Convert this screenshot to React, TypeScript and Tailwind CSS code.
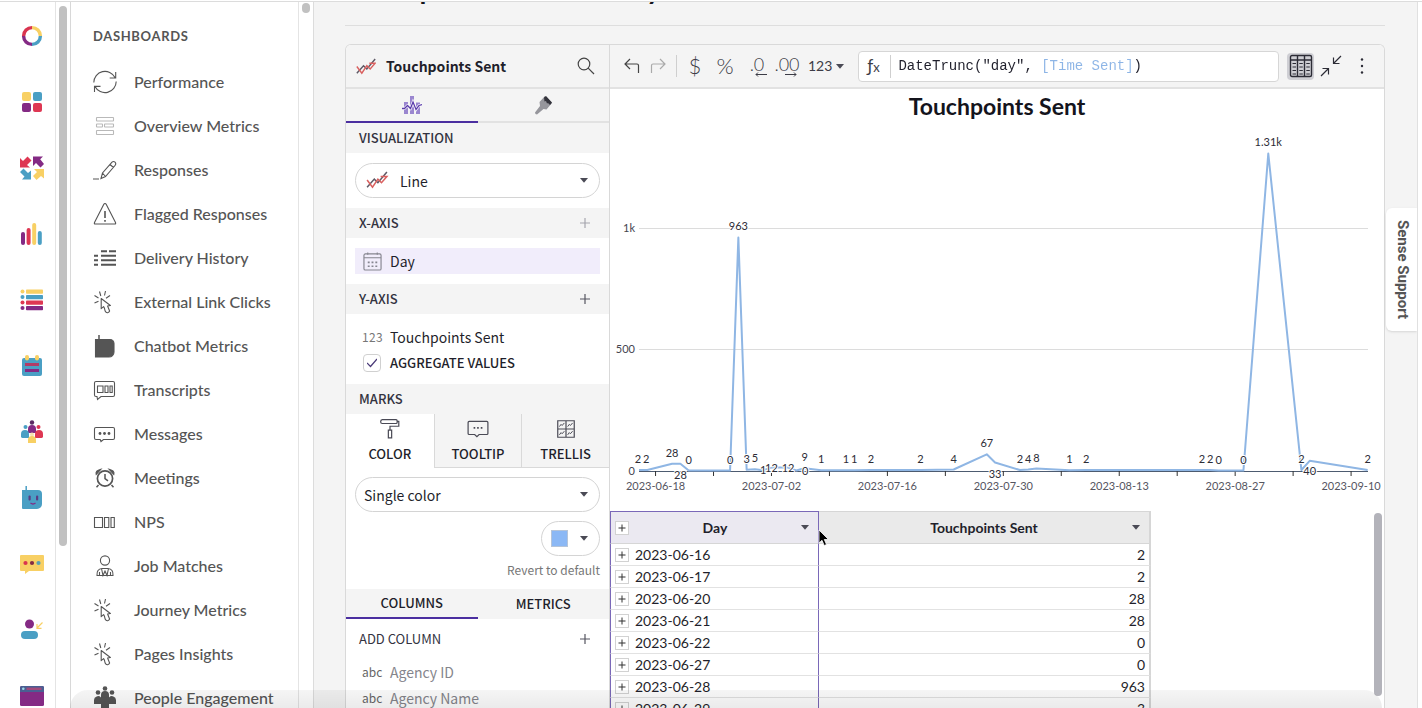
import type { ReactNode } from "react";

const PANEL_FONT = "font-['Noto_Sans_CJK_SC','Noto_Sans',sans-serif]";

// ---------- Rail icons ----------
const railIcons: { label: string; art: ReactNode }[] = [
  {
    label: "Home",
    art: (
      <g fill="none" strokeWidth="3.4">
        <path d="M12 3.6A8.4 8.4 0 0 0 3.6 12" stroke="#d9344f" />
        <path d="M3.6 12A8.4 8.4 0 0 0 12 20.4" stroke="#842a84" />
        <path d="M12 20.4A8.4 8.4 0 0 0 20.4 12" stroke="#4a9fc4" />
        <path d="M20.4 12A8.4 8.4 0 0 0 12 3.6" stroke="#f8d064" />
      </g>
    ),
  },
  {
    label: "Apps",
    art: (
      <>
        <rect x="2" y="2" width="9" height="9" rx="2" fill="#f8d064" />
        <rect x="13" y="2" width="9" height="9" rx="2" fill="#4a9fc4" />
        <rect x="2" y="13" width="9" height="9" rx="2" fill="#842a84" />
        <rect x="13" y="13" width="9" height="9" rx="2" fill="#de3753" />
      </>
    ),
  },
  {
    label: "Journeys",
    art: (
      <>
        <path d="M0 2l3 3 4.500-4.500 4 4L7 9l3 2.500H0z" fill="#de3753" />
        <path d="M13 .5h10l-2.800 2.800L24 8l-3.500 3.500L16 7l-3 3z" fill="#842a84" />
        <path d="M0 16l3.500-3.500L8 17l3-2.500v9H2L4.500 20.500z" fill="#4a9fc4" />
        <path d="M24 13v9.500l-3-2.500-4.500 4-3.500-4 4-4-3-3z" fill="#f8d064" />
      </>
    ),
  },
  {
    label: "Analytics",
    art: (
      <>
        <rect x="1" y="10" width="4" height="13" rx="2" fill="#842a84" />
        <rect x="6.600" y="6" width="4" height="17" rx="2" fill="#de3753" />
        <rect x="12.200" y="1" width="4" height="22" rx="2" fill="#f8d064" />
        <rect x="17.800" y="9" width="4" height="14" rx="2" fill="#4a9fc4" />
      </>
    ),
  },
  {
    label: "Lists",
    art: (
      <>
        {["#f8d064", "#4a9fc4", "#de3753", "#842a84"].map((c, i) => (
          <g key={c} fill={c}>
            <circle cx="2.500" cy={3.5 + i * 5.5} r="2" />
            <rect x="6" y={1.5 + i * 5.5} width="17" height="4.200" rx="0.800" />
          </g>
        ))}
      </>
    ),
  },
  {
    label: "Calendar",
    art: (
      <>
        <rect x="2" y="4" width="20" height="18" rx="2" fill="#4a9fc4" />
        <rect x="5" y="1" width="4" height="5.500" rx="2" fill="#f8d064" />
        <rect x="15" y="1" width="4" height="5.500" rx="2" fill="#f8d064" />
        <rect x="5" y="9" width="14" height="3" fill="#b23a66" />
        <rect x="5" y="15" width="14" height="3" fill="#842a84" />
      </>
    ),
  },
  {
    label: "People",
    art: (
      <>
        <circle cx="12" cy="2.500" r="2.200" fill="#5b2a63" />
        <path d="M8 13V9a4 4 0 0 1 8 0v4z" fill="#842a84" />
        <circle cx="5.500" cy="7" r="2" fill="#4a9fc4" />
        <circle cx="18.500" cy="7" r="2" fill="#de3753" />
        <path d="M1 17v-3a4 4 0 0 1 8 0v4H3a2 2 0 0 1-2-1z" fill="#4a9fc4" />
        <path d="M15 18v-4a4 4 0 0 1 8 0v3a2 2 0 0 1-2 1z" fill="#de3753" />
        <circle cx="12" cy="14.500" r="2" fill="#f6e2b0" />
        <path d="M8 23v-3a4 4 0 0 1 8 0v3z" fill="#f8d064" />
      </>
    ),
  },
  {
    label: "Chatbot",
    art: (
      <>
        <path d="M6.200 0v6" stroke="#4a9fc4" strokeWidth="1.500" />
        <path d="M2 4h16a4 4 0 0 1 4 4v10a5 5 0 0 1-5 5H3a1 1 0 0 1-1-1z" fill="#4a9fc4" />
        <rect x="8.500" y="9.500" width="2.200" height="5" rx="1" fill="#5a3b84" />
        <rect x="16" y="9.500" width="2.200" height="5" rx="1" fill="#5a3b84" />
        <path d="M10.500 17q2.500 2 5 0" stroke="#842a84" strokeWidth="1.300" fill="none" />
      </>
    ),
  },
  {
    label: "Messages",
    art: (
      <>
        <path d="M1 3h22a1 1 0 0 1 1 1v14a1 1 0 0 1-1 1H9l-4 3v-3H1a1 1 0 0 1-1-1V4a1 1 0 0 1 1-1z" fill="#f8d064" />
        <circle cx="5.500" cy="11" r="2.100" fill="#d9344f" />
        <circle cx="12" cy="11" r="2.100" fill="#842a44" />
        <circle cx="18.500" cy="11" r="2.100" fill="#5ba1b0" />
      </>
    ),
  },
  {
    label: "Referrals",
    art: (
      <>
        <circle cx="9.500" cy="6" r="4.500" fill="#842a84" />
        <path d="M1 17a4 4 0 0 1 4-4h9a4 4 0 0 1 0 8H5a4 4 0 0 1-4-4z" fill="#4a9fc4" />
        <path d="M22.500 4.500l-5.500 5.500M17 6v4.300h4.500" stroke="#f8d064" strokeWidth="1.200" fill="none" />
      </>
    ),
  },
  {
    label: "Pages",
    art: (
      <>
        <rect x="0" y="2" width="24" height="20" rx="1.500" fill="#842a84" />
        <path d="M1.500 2h21A1.500 1.500 0 0 1 24 3.500V8H0V3.500A1.500 1.500 0 0 1 1.500 2z" fill="#4a5f92" />
        <rect x="6.500" y="3.600" width="15" height="2.400" fill="#a34a7c" />
        <circle cx="3.300" cy="4.800" r="1.300" fill="#9fd6e6" />
      </>
    ),
  },
];

// ---------- Dashboard nav icons ----------
const clickArt = (
  <>
    <path d="M8.200 8.500v10.200l2.400-2q1 1.300 1.500 4.300 1 2 2.500 1.700t2-1.700l-2-5 2.800-.500z" strokeLinejoin="round" />
    <path d="M6.500 1.500l1.300 4.500M12.500 1l-1 4.500M1.500 5.500l4 2.500M17 5.500l-4 2.700M1.500 13l4-1.800" />
  </>
);

const navItems: { label: string; art: ReactNode }[] = [
  {
    label: "Performance",
    art: <path d="M.8 12.500A11.200 11.200 0 0 1 22 7.500M22.700 2v6h-6M23.200 11.500A11.200 11.200 0 0 1 2 16.500M1.500 22v-5.600h6" />,
  },
  {
    label: "Overview Metrics",
    art: (
      <g stroke="#b9b9b9">
        <rect x="3.500" y="3.500" width="17" height="3.500" rx="0.500" />
        <rect x="3.500" y="10" width="6" height="3" rx="0.500" />
        <rect x="11.500" y="10" width="9" height="3" rx="0.500" />
        <rect x="3.500" y="16.500" width="17" height="4" rx="0.500" />
      </g>
    ),
  },
  {
    label: "Responses",
    art: <path d="M0 21h6M8 20.500l1.500-5.500L19 4.200q1.500-1.500 3 0t0 3.300L12.500 18.500zM17 6.500l3.500 3M9.500 15l3 3.500" />,
  },
  {
    label: "Flagged Responses",
    art: (
      <>
        <path d="M12 1.500q.8 0 1.300 1l9.200 18q.6 1.500-.8 1.500H2.300q-1.400 0-.8-1.500l9.200-18q.5-1 1.300-1z" />
        <path d="M12 9v7M12 18v1.800" strokeWidth="1.600" />
      </>
    ),
  },
  {
    label: "Delivery History",
    art: (
      <path
        d="M8 5.300h6M16 5.300h7M1 9.800h4M8 9.800h15M1 14.200h4M8 14.200h15M1 18.700h4M8 18.700h15"
        strokeWidth="2"
      />
    ),
  },
  { label: "External Link Clicks", art: clickArt },
  {
    label: "Chatbot Metrics",
    art: (
      <>
        <path d="M6 1v5" strokeWidth="1.500" />
        <path d="M2.500 5.500H17a4 4 0 0 1 4 4V18a5 5 0 0 1-5 5H2.500z" fill="#555" />
      </>
    ),
  },
  {
    label: "Transcripts",
    art: (
      <>
        <path d="M3 3.500h17q1.500 0 1.500 1.500v12q0 1.500-1.500 1.500H8L4.500 21.500l-.5-3H3q-1.500 0-1.500-1.500V5q0-1.500 1.500-1.500z" />
        <path d="M4.500 8h5.500v6.500H4.500zM12 8h3v6.500h-3zM17 8h2.200v6.500H17z" />
      </>
    ),
  },
  {
    label: "Messages",
    art: (
      <>
        <path d="M3 5.500h17q1.500 0 1.500 1.500v9q0 1.500-1.500 1.500h-9.500l-2.500 2-.8-2H3q-1.500 0-1.500-1.500V7q0-1.500 1.500-1.500z" />
        <g fill="#555" stroke="none">
          <circle cx="7" cy="11.500" r="1.400" />
          <circle cx="11.500" cy="11.500" r="1.400" />
          <circle cx="16" cy="11.500" r="1.400" />
        </g>
      </>
    ),
  },
  {
    label: "Meetings",
    art: (
      <>
        <circle cx="12" cy="12.500" r="7.600" strokeWidth="1.700" />
        <path d="M12 8v4.700l3 2.200M5.500 19l-2 2.200M18.500 19l2 2.200" strokeWidth="1.500" />
        <path d="M3.200 8.500Q2 4.500 8 3.200zM20.800 8.500Q22 4.500 16 3.200z" fill="#555" />
      </>
    ),
  },
  {
    label: "NPS",
    art: <path d="M1.500 7.500h8v10h-8zM11.500 7.500h4.300v10h-4.300zM18 7.500h3.300v10H18z" />,
  },
  {
    label: "Job Matches",
    art: (
      <>
        <circle cx="12" cy="6.500" r="4.600" />
        <path d="M4 21.500q-.5-6.500 5-7h6q5.500.5 5 7zM8.500 14.500l1.500 7 2-4.500 2 4.500 1.500-7M6.500 21.500V18M17.500 21.500V18" />
      </>
    ),
  },
  { label: "Journey Metrics", art: clickArt },
  { label: "Pages Insights", art: clickArt },
  {
    label: "People Engagement",
    art: (
      <g fill="#555" stroke="none">
        <circle cx="12" cy="2.500" r="2.300" />
        <circle cx="5" cy="6.500" r="2.300" />
        <circle cx="19" cy="6.500" r="2.300" />
        <path d="M8 12V9a4 4 0 0 1 8 0v3z" />
        <path d="M1 18v-4a4 4 0 0 1 7-2.500h8a4 4 0 0 1 7 2.500v4h-7v5H8v-5z" />
      </g>
    ),
  },
];

// ---------- Chart data: days after 2023-06-16, value, and label shift from the point ----------
type Point = { day: number; value: number; dy?: number; dx?: number };

const points: Point[] = [
  { day: 0, value: 2, dx: -1 },
  { day: 1, value: 2, dx: -1 },
  { day: 4, value: 28 },
  { day: 5, value: 28, dy: 15 },
  { day: 6, value: 0 },
  { day: 11, value: 0 },
  { day: 12, value: 963 },
  { day: 13, value: 3 },
  { day: 14, value: 5 },
  { day: 15, value: 1, dy: 4 },
  { day: 16, value: 12, dy: 4 },
  { day: 18, value: 12, dy: 4 },
  { day: 19, value: 0, dy: 4, dx: 9 },
  { day: 20, value: 9 },
  { day: 22, value: 1 },
  { day: 25, value: 1 },
  { day: 26, value: 1 },
  { day: 28, value: 2 },
  { day: 34, value: 2 },
  { day: 38, value: 4 },
  { day: 42, value: 67 },
  { day: 43, value: 33, dy: 15 },
  { day: 46, value: 2 },
  { day: 47, value: 4 },
  { day: 48, value: 8 },
  { day: 52, value: 1 },
  { day: 54, value: 2 },
  { day: 68, value: 2 },
  { day: 69, value: 2 },
  { day: 70, value: 0 },
  { day: 73, value: 0 },
  { day: 76, value: 1310 },
  { day: 80, value: 2 },
  { day: 81, value: 40, dy: 14 },
  { day: 88, value: 2 },
];

const DAY_WIDTH = 8.28;
const px = (day: number) => 29 + day * DAY_WIDTH;
const py = (value: number) => 381.5 - value * 0.242;

const xTicks = [
  "2023-06-18",
  "2023-07-02",
  "2023-07-16",
  "2023-07-30",
  "2023-08-13",
  "2023-08-27",
  "2023-09-10",
];

const rows = [
  ["2023-06-16", "2"],
  ["2023-06-17", "2"],
  ["2023-06-20", "28"],
  ["2023-06-21", "28"],
  ["2023-06-22", "0"],
  ["2023-06-27", "0"],
  ["2023-06-28", "963"],
  ["2023-06-29", "3"],
];

// ---------- Small shared pieces ----------
const Caret = ({ className = "" }: { className?: string }) => (
  <svg viewBox="0 0 8 5" className={`h-[5px] w-2 ${className}`} fill="#4a4a55" aria-hidden="true">
    <path d="M0 0h8L4 4.800z" />
  </svg>
);

const LineIcon = ({ className = "" }: { className?: string }) => (
  <svg viewBox="0 0 24 20" className={className} fill="none" strokeWidth="1.700" aria-hidden="true">
    <path d="M1 18l8-9 4 4L23 1" stroke="#5f5a66" />
    <path d="M1 10l6 8 6-9 4 4 6-7h-7" stroke="#d9605f" />
  </svg>
);

const Plus = ({ color = "#555560" }: { color?: string }) => (
  <svg viewBox="0 0 10 10" className="size-2.5" stroke={color} strokeWidth="1.200" aria-hidden="true">
    <path d="M5 0v10M0 5h10" />
  </svg>
);

const SectionHeader = ({ title, plus }: { title: string; plus?: string }) => (
  <div className="flex h-[30px] items-center justify-between bg-[#f4f4f4] pr-[19px] pl-[13px]">
    <h3 className="text-[13px] leading-5 font-medium text-[#33333f]">{title}</h3>
    {plus && (
      <button type="button" aria-label={`Add to ${title}`}>
        <Plus color={plus} />
      </button>
    )}
  </div>
);

const Rail = () => (
  <div className="flex shrink-0 border-r border-[#d8d8d8]">
    <nav aria-label="Main" className="w-14 border-r border-[#e4e4e4] pt-px pl-2">
      {railIcons.map((item) => (
        <a key={item.label} href="#" aria-label={item.label} className="flex h-[66px] items-center justify-center">
          <svg viewBox="0 0 24 24" className="size-6" aria-hidden="true">
            {item.art}
          </svg>
        </a>
      ))}
    </nav>
    <div className="w-3.5 px-[3px] pt-1">
      <div className="h-[540px] rounded-full bg-[#c1c1c1]" />
    </div>
  </div>
);

const Sidebar = () => (
  <div className="flex shrink-0 border-r border-[#dcdcdc]">
    <nav aria-label="Dashboards" className="w-[228px] border-r border-[#e4e4e4] pl-[22px] font-['Lato',sans-serif] text-[#555]">
      <h2 className="h-[58px] pt-6 text-[13px] leading-5 font-bold tracking-wider">DASHBOARDS</h2>
      {navItems.map((item) => (
        <a key={item.label} href="#" className="flex h-11 items-center gap-[17px] text-base font-medium whitespace-nowrap">
          <svg viewBox="0 0 24 24" className="size-6 shrink-0" fill="none" stroke="#555" strokeWidth="1.100" aria-hidden="true">
            {item.art}
          </svg>
          {item.label}
        </a>
      ))}
    </nav>
    <div className="w-3.5 px-[3px] pt-px">
      <div className="h-2.5 rounded-full bg-[#c1c1c1]" />
    </div>
  </div>
);

const markTabs: { label: string; art: ReactNode }[] = [
  {
    label: "COLOR",
    art: <path d="M3 1.500h12.500q1 0 1 1v1.500q0 1-1 1H3Q1.500 5 1.500 3.300T3 1.500zM17 3h1v4.500H10v3M8.500 11h3v7h-3z" />,
  },
  {
    label: "TOOLTIP",
    art: (
      <>
        <path d="M2 3h16q1 0 1 1v10q0 1-1 1h-7l-2 2-2-2H2q-1 0-1-1V4q0-1 1-1z" />
        <path d="M6 9h1.500M9.200 9h1.500M12.500 9H14" strokeWidth="1.600" />
      </>
    ),
  },
  {
    label: "TRELLIS",
    art: (
      <>
        <path d="M2.500 2.500h15v15h-15zM10 2.500v15M2.500 10h15" />
        <path
          d="M4 7.800l1.500-2 1 1L8.500 4.500M11.500 7.800l1.500-2 1 1 2-2.300M4 15.300l1.500-2 1 1 2-2.300M11.500 15.300l1.500-2 1 1 2-2.300"
          strokeWidth="0.900"
        />
      </>
    ),
  },
];

const ConfigPanel = () => (
  <aside className={`flex w-[264px] shrink-0 flex-col border-r border-[#d9d9d9] ${PANEL_FONT} text-[#1f1f2b] [&>*]:shrink-0`}>
    <div className="flex h-11 items-center border-b-2 border-[#e2e2e2] bg-[#f4f4f4] pr-3.5 pl-2.5">
      <LineIcon className="h-[17px] w-5" />
      <h2 className="ml-2.5 flex-1 text-sm leading-5 font-bold">Touchpoints Sent</h2>
      <button type="button" aria-label="Search">
        <svg viewBox="0 0 18 18" className="size-[18px]" fill="none" stroke="#444" strokeWidth="1.200" aria-hidden="true">
          <circle cx="7" cy="7" r="5.800" />
          <path d="M11.200 11.200L17 17" />
        </svg>
      </button>
    </div>

    <div className="flex h-[34px] bg-[#f4f4f4]">
      <button type="button" aria-label="Chart data" className="flex flex-1 items-center justify-center border-b-2 border-[#4b2fa0]">
        <svg viewBox="0 0 20 20" className="size-5" aria-hidden="true">
          <path d="M2 7h4v12H2zM8 1h4v18H8zM14 7.500h4V19h-4z" fill="#9a86cf" />
          <path d="M0 13.500h2.500l3-3 3 3L11 7l3 7.500 3-4 3-1" fill="none" stroke="#fff" strokeWidth="2.600" />
          <path d="M0 13.500h2.500l3-3 3 3L11 7l3 7.500 3-4 3-1" fill="none" stroke="#5b3cab" strokeWidth="1.300" />
        </svg>
      </button>
      <button type="button" aria-label="Chart format" className="flex flex-1 items-center justify-center border-b-2 border-[#e2e2e2]">
        <svg viewBox="0 0 20 20" className="size-5" aria-hidden="true">
          <path d="M12 1l7 7-5.500 6.500-3-.5-6.500 5.500q-2 0-2-2L7 11l-.500-4z" fill="#96969c" />
          <path d="M11 2.500L13 1l6 6.500-2 2.500-2-2-1 .5-1-2.500-1.500.5z" fill="#34343c" />
        </svg>
      </button>
    </div>

    <SectionHeader title="VISUALIZATION" />
    <div className="px-[9px] py-2.5">
      <label className="relative block">
        <span className="sr-only">Chart type</span>
        <LineIcon className="absolute top-2 left-2.5 h-[18px] w-6" />
        <select className="block h-[35px] w-full appearance-none rounded-full border border-[#d4d4d4] bg-transparent pl-11 text-sm leading-6">
          <option>Line</option>
        </select>
        <Caret className="absolute top-[15px] right-3" />
      </label>
    </div>

    <SectionHeader title="X-AXIS" plus="#a5a5ad" />
    <div className="px-[9px] py-2.5">
      <div className="flex h-[26px] items-center bg-[#f1edfb] pl-2 text-sm">
        <svg viewBox="0 0 20 20" className="mr-2 size-[19px]" fill="none" stroke="#85858f" strokeWidth="1.200" aria-hidden="true">
          <rect x="1" y="2" width="18" height="17" rx="1.500" />
          <path d="M1 6h18M5 .5V3M15 .5V3" />
          <path d="M5 11h2M9 11h2M13 11h2M5 15h2M9 15h2M13 15h2" strokeWidth="1.800" />
        </svg>
        Day
      </div>
    </div>

    <SectionHeader title="Y-AXIS" plus="#555560" />
    <div className="flex h-[70px] flex-col pt-2.5 pl-4">
      <div className="flex h-[26px] items-center text-sm">
        <span className="w-7 text-xs tracking-wide text-[#777]">123</span>
        Touchpoints Sent
      </div>
      <label className="flex h-[26px] items-center text-[13px] font-medium">
        <span className="relative mr-2 block size-5 p-px">
          <input
            type="checkbox"
            defaultChecked
            className="block size-[18px] appearance-none rounded-sm border border-[#d0d0d0] bg-white"
          />
          <svg viewBox="0 0 10 10" className="pointer-events-none absolute top-[5px] left-[5px] size-2.5" fill="none" stroke="#4a3a78" strokeWidth="1.200" aria-hidden="true">
            <path d="M0 5l3.500 3.500L10 1" />
          </svg>
        </span>
        AGGREGATE VALUES
      </label>
    </div>

    <SectionHeader title="MARKS" />
    <div className="grid h-[54px] grid-cols-3">
      {markTabs.map((tab, i) => (
        <button
          key={tab.label}
          type="button"
          className={`flex flex-col items-center pt-1 text-[13px] leading-5 font-medium ${
            i === 0 ? "bg-white" : "border-b border-l border-[#d9d9d9] bg-[#f4f4f4]"
          }`}
        >
          <svg viewBox="0 0 20 20" className="mb-1 size-[22px] shrink-0" fill="none" stroke="#4a4a55" strokeWidth="1.100" aria-hidden="true">
            {tab.art}
          </svg>
          {tab.label}
        </button>
      ))}
    </div>

    <div className="flex flex-col items-end px-[9px] pt-[9px]">
      <label className="relative block w-full">
        <span className="sr-only">Color mode</span>
        <select className="block h-[35px] w-full appearance-none rounded-full border border-[#d4d4d4] bg-transparent pl-2 text-sm leading-6">
          <option>Single color</option>
        </select>
        <Caret className="absolute top-[15px] right-3" />
      </label>
      <button
        type="button"
        aria-label="Pick color"
        className="mt-[9px] flex h-[35px] w-[59px] items-center justify-between rounded-full border border-[#d4d4d4] pr-[11px] pl-[9px]"
      >
        <span className="size-[17px] border border-[#b5c4d8] bg-[#8bb8f5]" />
        <Caret />
      </button>
      <button type="button" className="mt-1 mb-[9px] text-xs leading-5 text-[#777]">
        Revert to default
      </button>
    </div>

    <div className="flex h-[30px] bg-[#f4f4f4] text-[13px] font-medium">
      <button type="button" className="flex-1 border-b-2 border-[#4b2fa0]">
        COLUMNS
      </button>
      <button type="button" className="flex-1">
        METRICS
      </button>
    </div>

    <div className="flex h-10 items-center justify-between pr-[19px] pl-[13px]">
      <span className="text-[13px] text-[#33333f]">ADD COLUMN</span>
      <button type="button" aria-label="Add column">
        <Plus />
      </button>
    </div>
    {["Agency ID", "Agency Name"].map((name) => (
      <div key={name} className="flex h-[26px] items-center pl-4 text-sm text-[#85858c]">
        <span className="w-7 text-xs text-[#666]">abc</span>
        {name}
      </div>
    ))}
  </aside>
);

const Toolbar = () => (
  <div className="flex h-11 shrink-0 items-center border-b-2 border-[#e2e2e2] bg-[#f4f4f4] px-2 font-['Lato',sans-serif] text-[#3c3c46]">
    <button type="button" aria-label="Undo" className="flex w-7 justify-center">
      <svg viewBox="0 0 16 16" className="size-4" fill="none" stroke="#444" strokeWidth="1.200" aria-hidden="true">
        <path d="M6 1L1 6l5 5M1 6h12q1.500 0 1.500 1.500V15" />
      </svg>
    </button>
    <button type="button" aria-label="Redo" className="flex w-6 justify-center">
      <svg viewBox="0 0 16 16" className="size-4" fill="none" stroke="#aaa" strokeWidth="1.200" aria-hidden="true">
        <path d="M10 1l5 5-5 5M15 6H3Q1.500 6 1.500 7.500V15" />
      </svg>
    </button>
    <span className="mr-[3px] ml-1.5 h-[22px] w-px bg-[#cfcfcf]" />
    <button type="button" className="w-[30px] text-[22px] leading-6 font-light">$</button>
    <button type="button" className="w-[30px] text-[22px] leading-6 font-light">%</button>
    <button type="button" aria-label="Fewer decimals" className="flex w-[34px] flex-col items-center">
      <span className="text-lg leading-4 font-light">.0</span>
      <svg viewBox="0 0 12 5" className="ml-2 h-[5px] w-3" fill="none" stroke="#3c3c46" aria-hidden="true">
        <path d="M12 2.500H1M3 .5l-2 2 2 2" />
      </svg>
    </button>
    <button type="button" aria-label="More decimals" className="flex w-[26px] flex-col items-center">
      <span className="text-lg leading-4 font-light">.00</span>
      <svg viewBox="0 0 12 5" className="ml-2 h-[5px] w-3" fill="none" stroke="#3c3c46" aria-hidden="true">
        <path d="M0 2.500h11M9 .5l2 2-2 2" />
      </svg>
    </button>
    <button type="button" className="ml-2 flex items-center gap-1 text-sm">
      123
      <Caret />
    </button>

    <div className="ml-3.5 flex h-[31px] flex-1 items-center rounded-sm border border-[#d6d6d6] bg-white">
      <label htmlFor="formula" className="w-8 border-r border-[#cfcfcf] pl-2 text-[17px] leading-[22px]">
        ƒ<span className="text-[13px]">x</span>
      </label>
      <input
        id="formula"
        defaultValue={'DateTrunc("day", [Time Sent])'}
        className="ml-[7px] min-w-0 flex-1 bg-[linear-gradient(90deg,#1f1f2b_17ch,#8db5e6_17ch,#8db5e6_28ch,#1f1f2b_28ch)] bg-clip-text font-['Liberation_Mono',monospace] text-sm text-transparent caret-[#1f1f2b] outline-none"
      />
    </div>

    <button type="button" aria-label="Show data table" className="ml-2 flex size-[27px] items-center justify-center rounded-sm bg-[#cfcfd4]">
      <svg viewBox="0 0 24 24" className="size-6" fill="none" stroke="#2c2c36" strokeWidth="1.400" aria-hidden="true">
        <rect x="1.500" y="1.500" width="21" height="21" rx="1.500" />
        <path d="M1.500 6h21M8.500 1.500v21M15.500 1.500v21" />
        <path d="M3.500 9.500h3.500M3.500 13h3.500M3.500 16.500h3.500M3.500 20h3.500M10.300 9.500h3.500M10.300 13h3.500M10.300 16.500h3.500M10.300 20h3.500M17.300 9.500h3.500M17.300 13h3.500M17.300 16.500h3.500M17.300 20h3.500" strokeWidth="1.200" />
      </svg>
    </button>
    <button type="button" aria-label="Collapse" className="flex w-[34px] justify-center">
      <svg viewBox="0 0 22 22" className="size-[22px]" fill="none" stroke="#2c2c36" strokeWidth="1.200" aria-hidden="true">
        <path d="M21 1l-7.500 7.500M13.500 2.500v6h6M1 21l7.500-7.500M2.500 13.500h6v6" />
      </svg>
    </button>
    <button type="button" aria-label="More" className="flex w-7 justify-center">
      <svg viewBox="0 0 4 16" className="h-4 w-1" fill="#2c2c36" aria-hidden="true">
        <circle cx="2" cy="1.500" r="1.200" />
        <circle cx="2" cy="8" r="1.200" />
        <circle cx="2" cy="14.500" r="1.200" />
      </svg>
    </button>
  </div>
);

const Chart = () => (
  <svg viewBox="0 0 774 422" className="block h-auto w-full shrink-0 font-['Lato',sans-serif]" role="img" aria-label="Touchpoints sent per day">
    <text x="387" y="26" textAnchor="middle" className="fill-[#14141c] text-[23px] font-bold">
      Touchpoints Sent
    </text>
    <g className="fill-[#44444f] text-[11px]" textAnchor="end">
      <text x="25" y="143">1k</text>
      <text x="25" y="264">500</text>
      <text x="25" y="386">0</text>
    </g>
    <path d="M29 139.500h729M29 260.500h729" stroke="#dcdcdc" />
    <path d="M29 382.500h729" stroke="#4d5b70" />
    {Array.from({ length: 13 }, (_, i) => (
      <path key={i} d={`M${px(2 + i * 7)} 382v5`} stroke="#333" />
    ))}
    <polyline
      points={points.map((p) => `${px(p.day)},${py(p.value)}`).join(" ")}
      fill="none"
      stroke="#8fb6e4"
      strokeWidth="2"
      strokeLinejoin="round"
    />
    <g className="fill-[#2c2c36] text-[11px]" textAnchor="middle" stroke="#fff" strokeWidth="2" paintOrder="stroke">
      {points.map((p) => (
        <text key={p.day} x={px(p.day) + (p.dx ?? 0)} y={py(p.value) + (p.dy ?? -7)}>
          {p.value > 1000 ? "1.31k" : p.value}
        </text>
      ))}
    </g>
    <g className="fill-[#55555f] text-[11px]" textAnchor="middle">
      {xTicks.map((label, i) => (
        <text key={label} x={px(2 + i * 14)} y="401">
          {label}
        </text>
      ))}
    </g>
  </svg>
);

const ExpandButton = ({ label }: { label: string }) => (
  <button type="button" aria-label={label} className="flex size-3.5 shrink-0 items-center justify-center border border-[#d2d2d2] bg-white">
    <svg viewBox="0 0 8 8" className="size-2" stroke="#333" aria-hidden="true">
      <path d="M4 .5v7M.5 4h7" />
    </svg>
  </button>
);

const DataTable = () => (
  <div className="flex min-h-0 flex-1 justify-between font-['Lato',sans-serif] text-[#1f1f2b]">
    <table className="h-fit w-[541px] table-fixed border-separate border-spacing-0 text-sm">
      <thead>
        <tr className="h-[33px]">
          <th className="w-[209px] border-t border-r border-b border-l border-[#7a68b8] border-b-[#d6d6d6] bg-[#ebe9f1] p-0 font-bold">
            <div className="flex items-center justify-between pr-[9px] pl-1">
              <ExpandButton label="Expand all" />
              Day
              <Caret />
            </div>
          </th>
          <th className="border-t border-r-2 border-b border-[#d6d6d6] bg-[#eaeaea] p-0 font-bold">
            <div className="flex items-center pr-[9px] pl-[17px]">
              <span className="flex-1">Touchpoints Sent</span>
              <Caret />
            </div>
          </th>
        </tr>
      </thead>
      <tbody>
        {rows.map(([day, count]) => (
          <tr key={day} className="h-[22px]">
            <td className="border-r border-b border-l border-[#7a68b8] border-b-[#e2e2e2] p-0">
              <div className="flex items-center gap-1.5 pl-1 leading-[21px]">
                <ExpandButton label={`Expand ${day}`} />
                {day}
              </div>
            </td>
            <td className="border-r-2 border-b border-[#d6d6d6] border-b-[#e2e2e2] p-0 pr-1 text-right leading-[21px]">{count}</td>
          </tr>
        ))}
      </tbody>
    </table>
    <div className="mt-0.5 mr-0.5 h-[183px] w-2 rounded-full bg-[#b3b3ba]" />
  </div>
);

export default function App() {
  return (
    <div className="relative flex h-screen overflow-hidden bg-white pt-px">
      <div className="flex min-w-0 flex-1 border-t border-[#dcdcdc]">
        <Rail />
        <Sidebar />

        <main className="relative mr-1 flex min-w-0 flex-1 flex-col overflow-hidden border-r border-[#e0e0e0] bg-[#f4f4f4] pr-8 pl-[31px]">
          <header className="flex h-6 shrink-0 items-end border-b border-[#dedede] pb-[17px]">
            <h1 className="font-['Lato',sans-serif] text-[28px] leading-10 font-bold whitespace-nowrap text-[#14141c]">
              Touchpoints Sent Weekly
            </h1>
          </header>

          <section className="mt-[18px] flex min-h-0 flex-1 overflow-hidden rounded-t-md border-x border-t border-[#d9d9d9] bg-white">
            <ConfigPanel />
            <div className="flex min-w-0 flex-1 flex-col">
              <Toolbar />
              <Chart />
              <DataTable />
            </div>
          </section>

          <button
            type="button"
            className="absolute top-[206px] right-0 h-[123px] w-[31px] rounded-l-md bg-white pl-[3px] font-['Roboto',sans-serif] text-[15px] font-bold text-[#555] shadow [writing-mode:vertical-rl]"
          >
            Sense Support
          </button>
        </main>
      </div>

      {/* soft shade along the bottom edge */}
      <div className="pointer-events-none absolute right-10 bottom-0 left-[70px] h-[18px] rounded-t-[50px] bg-gradient-to-b from-black/4 to-black/8" />

      {/* mouse pointer */}
      <svg viewBox="0 0 12 18" className="pointer-events-none absolute top-[529px] left-[818px] h-[18px] w-3" aria-hidden="true">
        <path d="M1 1v13l3-2.700L6.200 16.500l2.300-1L6.300 10.500H10.500z" fill="#000" stroke="#fff" strokeWidth="0.800" />
      </svg>
    </div>
  );
}
